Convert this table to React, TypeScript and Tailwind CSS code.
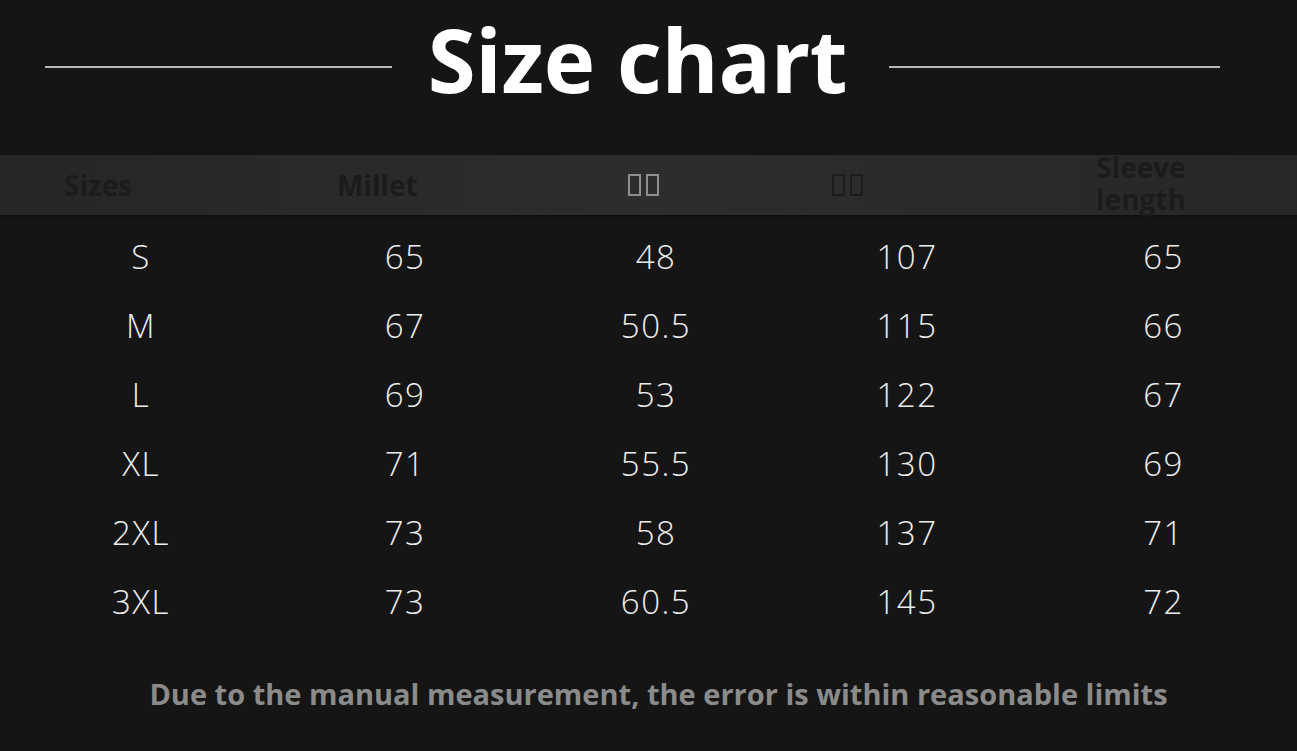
import React from "react";

const rows = [
  ["S", "65", "48", "107", "65"],
  ["M", "67", "50.5", "115", "66"],
  ["L", "69", "53", "122", "67"],
  ["XL", "71", "55.5", "130", "69"],
  ["2XL", "73", "58", "137", "71"],
  ["3XL", "73", "60.5", "145", "72"],
];

function Tofu({ light }: { light?: boolean }) {
  const cls = light
    ? "inline-block w-[13px] h-[22px] border-2 border-[#8e8e8e]"
    : "inline-block w-[13px] h-[22px] border-2 border-[#1c1c1c]";
  return (
    <span className="inline-flex gap-[5px] items-center" aria-label="□□">
      <span className={cls} />
      <span className={cls} />
    </span>
  );
}

export default function App() {
  return (
    <div
      className="w-[1297px] h-[751px] bg-[#151515] overflow-hidden"
      style={{ fontFamily: '"Open Sans", "Noto Sans", sans-serif' }}
    >
      {/* Title row */}
      <div className="flex items-start pl-[45px] h-[120px]">
        <div className="w-[347px] h-[2px] mt-[66px] bg-[#b8b8b8]" />
        <div className="w-[497px] flex justify-center pr-[6px]">
          <span className="text-[87px] leading-[1.37] font-bold text-white tracking-[-0.3px]">
            Size chart
          </span>
        </div>
        <div className="w-[331px] h-[2px] mt-[66px] bg-[#b8b8b8]" />
      </div>

      {/* Header band */}
      <div className="mt-[35px] h-[60px] bg-gradient-to-r from-[#262626] via-[#2d2d2d] to-[#272727] flex items-center pl-[64px] text-[28px] font-bold text-[#1b1b1b] shadow-[0_2px_4px_rgba(0,0,0,0.4)]">
        <div className="w-[273px] leading-none">Sizes</div>
        <div className="w-[291px] leading-none">Millet</div>
        <div className="w-[204px] flex">
          <Tofu light />
        </div>
        <div className="w-[261px] flex">
          <Tofu />
        </div>
        <div className="w-[96px] flex flex-col items-center -mt-[4px]">
          <div className="h-[32px] leading-[32px]">Sleeve</div>
          <div className="h-[32px] leading-[32px]">length</div>
        </div>
      </div>

      {/* Data rows */}
      <div className="mt-[7px]">
        {rows.map((r, i) => (
          <div
            key={i}
            className="h-[69px] grid grid-cols-[282px_246px_256px_246px_267px] items-center text-[33px] font-light text-[#ededed] tracking-[1.5px]"
          >
            {r.map((c, j) => (
              <div key={j} className="text-center leading-none">
                {c}
              </div>
            ))}
          </div>
        ))}
      </div>

      {/* Footer */}
      <div className="mt-[39px] text-center text-[29px] leading-[38px] font-bold text-[#8b8b8b] pl-[20px]">
        Due to the manual measurement, the error is within reasonable limits
      </div>
    </div>
  );
}
